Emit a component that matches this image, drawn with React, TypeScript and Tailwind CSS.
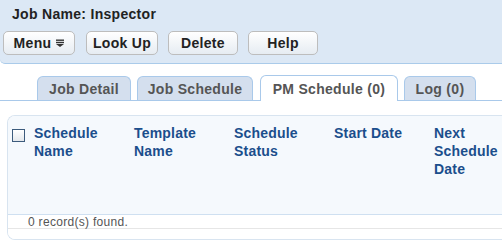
import React from "react";

const font = { fontFamily: '"Liberation Sans", Arial, sans-serif' };

function Btn({ children, w }: { children: React.ReactNode; w: string }) {
  return (
    <div
      className={`${w} h-[24px] flex items-center justify-center rounded-[5px] border border-[#bdbdbd] bg-gradient-to-b from-white to-[#e6ecf2] text-[14px] font-bold text-[#222] leading-none tracking-[0.3px]`}
    >
      {children}
    </div>
  );
}

function Tab({ label, w, active }: { label: string; w: string; active?: boolean }) {
  return (
    <div
      className={`${w} ${
        active ? "bg-white h-[26px] mb-[-1px] text-[#555]" : "bg-[#d4dfee] h-[24px] text-[#555]"
      } rounded-t-[6px] border border-b-0 border-[#a9c9ea] flex items-center justify-center text-[14px] font-bold leading-none tracking-[0.3px]`}
    >
      {label}
    </div>
  );
}

export default function App() {
  return (
    <div className="w-[502px] h-[243px] bg-white overflow-hidden" style={font}>
      <div className="h-[64px] bg-[#dce8f5] border-b border-[#aacbea] rounded-bl-[5px]">
        <div className="pt-[6px] pl-[12px] text-[14px] leading-[16px] font-bold text-[#222] tracking-[0.3px]">
          Job Name: Inspector
        </div>
        <div className="flex mt-[9px] ml-[3px]">
          <Btn w="w-[72px]">
            <span>Menu</span>
            <svg width="8" height="8" viewBox="0 0 8 8" className="ml-[5px]">
              <rect x="0" y="0.5" width="8" height="1.4" fill="#333" />
              <rect x="0" y="2.8" width="8" height="1.4" fill="#333" />
              <polygon points="0,5 8,5 4,8" fill="#333" />
            </svg>
          </Btn>
          <div className="w-[11px]" />
          <Btn w="w-[72px]">Look Up</Btn>
          <div className="w-[10px]" />
          <Btn w="w-[70px]">Delete</Btn>
          <div className="w-[10px]" />
          <Btn w="w-[70px]">Help</Btn>
        </div>
      </div>

      <div className="mt-[12px] flex items-end pl-[37px] border-b border-[#a9c9ea] h-[25px]">
        <Tab label="Job Detail" w="w-[94px]" />
        <div className="w-[6px]" />
        <Tab label="Job Schedule" w="w-[116px]" />
        <div className="w-[7px]" />
        <Tab label="PM Schedule (0)" w="w-[138px]" active />
        <div className="w-[6px]" />
        <Tab label="Log (0)" w="w-[72px]" />
      </div>

      <div className="mt-[14px] ml-[7px] border border-r-0 border-[#d8e4f0] rounded-l-[8px] overflow-hidden">
        <div className="h-[99px] bg-[#f5f9fd] flex border-b border-[#cfe0f1]">
          <div className="w-[26px] shrink-0">
            <div className="ml-[4px] mt-[13px] w-[13px] h-[13px] border border-[#3c5b7c] bg-gradient-to-b from-white to-[#e4e8ec]" />
          </div>
          {[
            ["Schedule", "Name"],
            ["Template", "Name"],
            ["Schedule", "Status"],
            ["Start Date"],
            ["Next", "Schedule", "Date"],
          ].map((lines, i) => (
            <div
              key={i}
              className="w-[100px] shrink-0 pt-[8px] text-[14px] leading-[18px] font-bold text-[#1b4e8c] tracking-[0.2px]"
            >
              {lines.map((l, j) => (
                <div key={j}>{l}</div>
              ))}
            </div>
          ))}
        </div>
        <div className="h-[14px] bg-white border-b border-[#e6e6e6] pl-[20px] text-[12px] leading-[14px] text-[#555] tracking-[0.3px]">
          0 record(s) found.
        </div>
        <div className="h-[10px] bg-white" />
      </div>
    </div>
  );
}
